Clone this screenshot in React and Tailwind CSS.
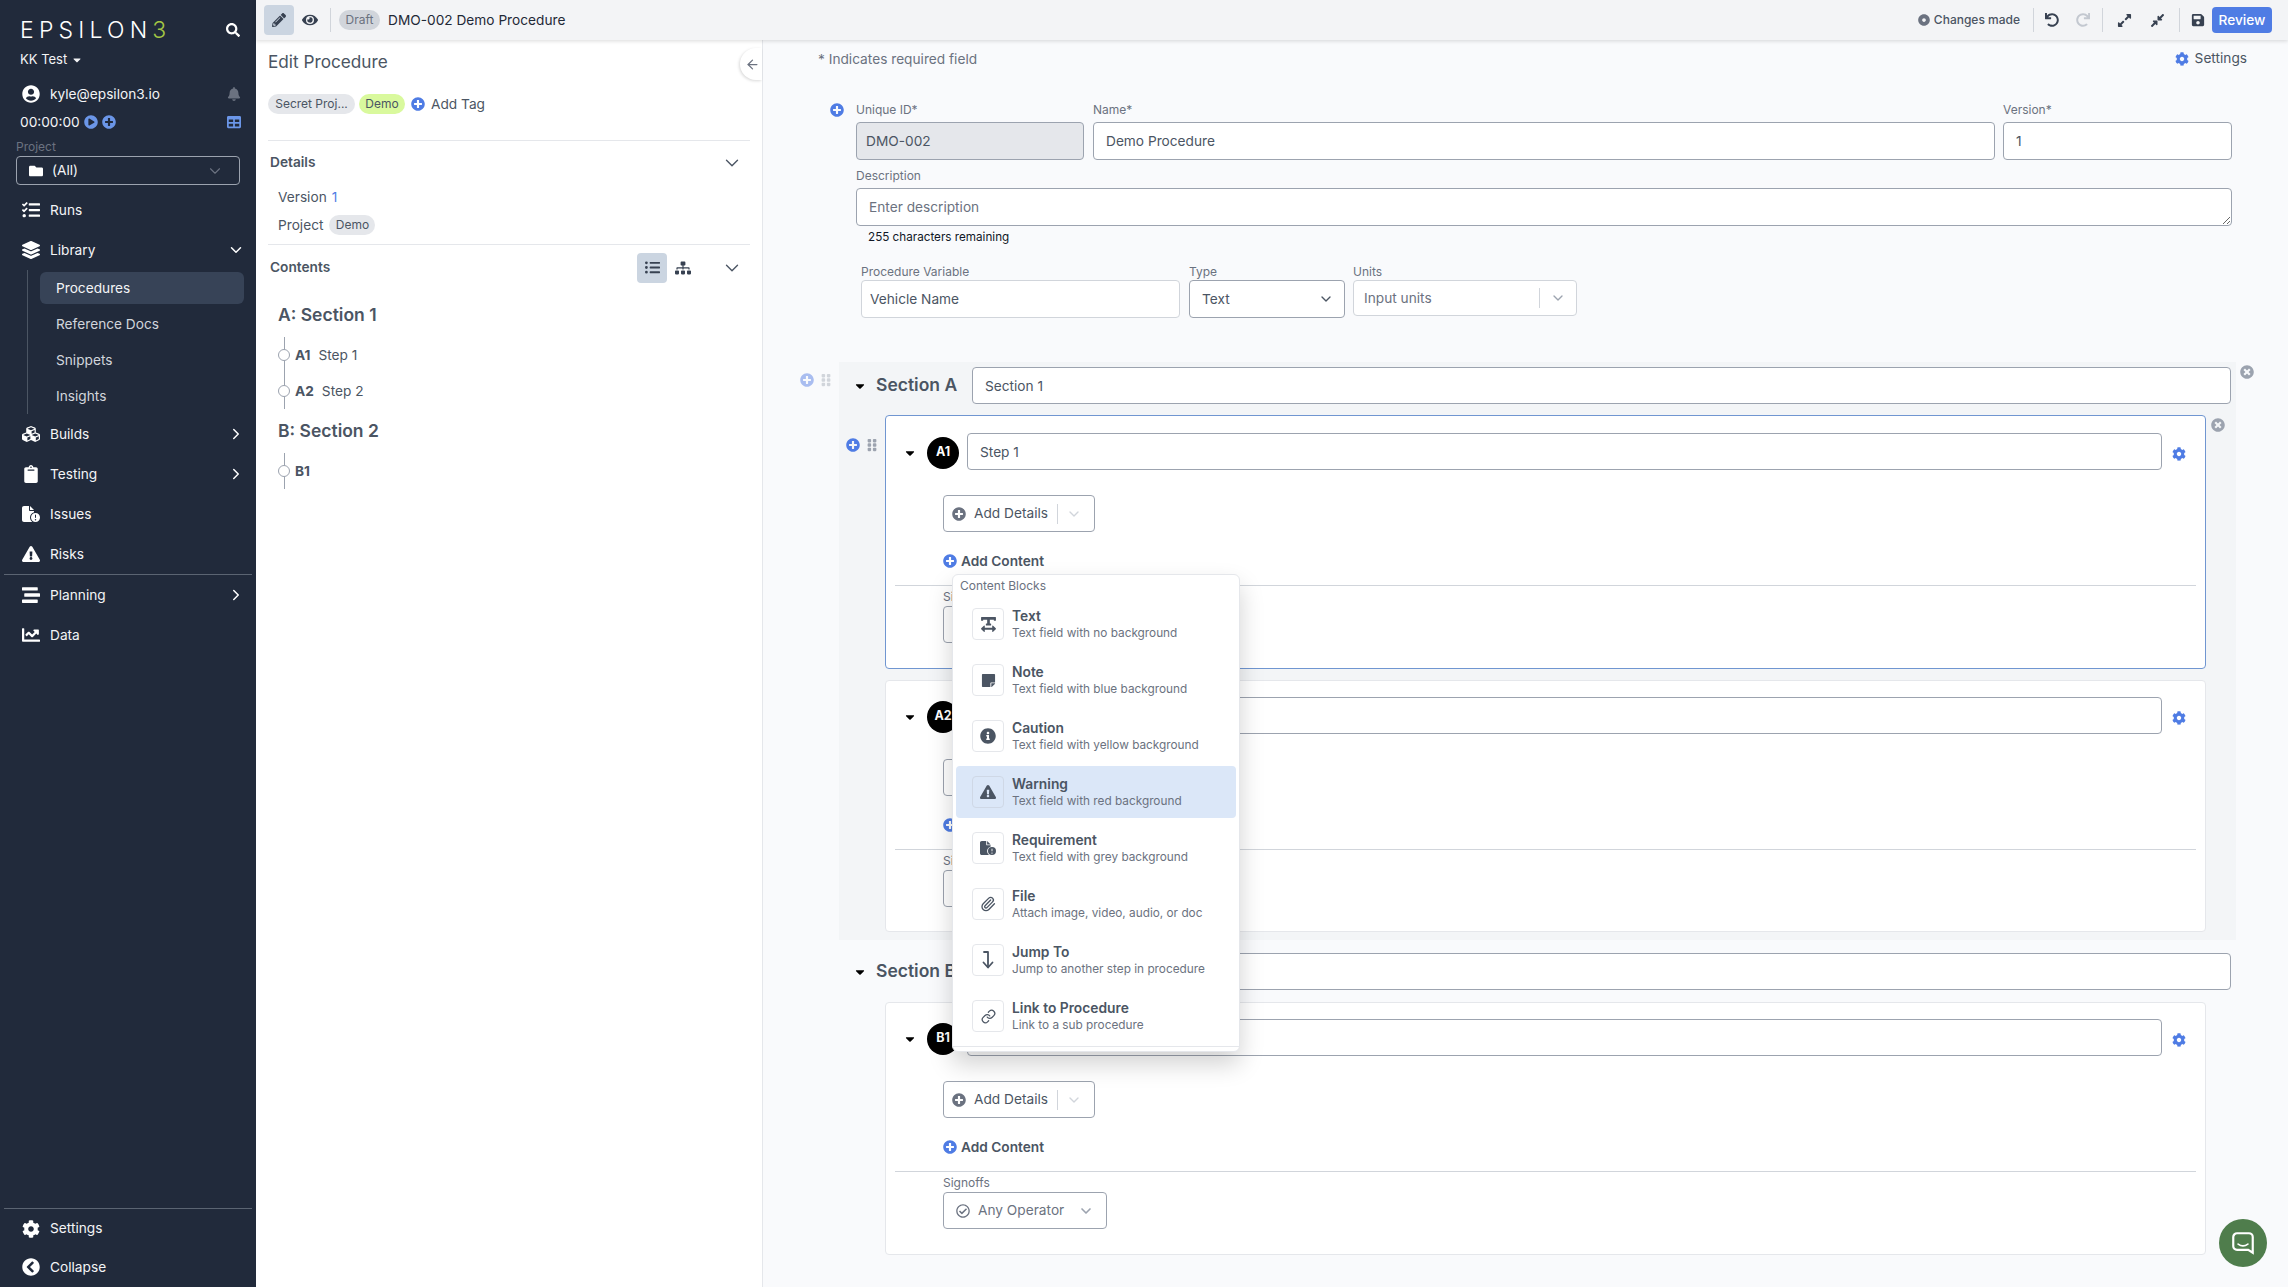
import React from "react";
import { ChevronDown, ChevronRight, ArrowLeft, Link as LinkIcon, Paperclip } from "lucide-react";
import {
  FaSearch, FaCaretDown, FaUserCircle, FaBell, FaPlayCircle, FaPlusCircle, FaTable, FaFolder, FaTasks,
  FaLayerGroup, FaCubes, FaClipboard, FaExclamationTriangle, FaStream, FaChartLine, FaCog, FaChevronCircleLeft,
  FaPencilAlt, FaEye, FaUndo, FaRedo, FaExpandAlt, FaCompressAlt, FaSave, FaListUl, FaSitemap, FaDotCircle,
  FaTextWidth, FaStickyNote, FaInfoCircle, FaGripVertical, FaTimesCircle, FaRegCheckCircle,
} from "react-icons/fa";
import { FaFileCircleExclamation } from "react-icons/fa6";

const inputCls = "rounded border border-[#9ca3af] text-[13.7px] text-[#4b5563] outline-none placeholder:text-[#6b7280]";

function NavItem({ icon: Icon, label, open, arrow }) {
  return (
    <div className="flex h-[40px] items-center pl-[22px] pr-[11px] text-[13.7px] text-[#f3f4f6]">
      <Icon size={18} className="w-[18px] shrink-0 text-white" />
      <span className="ml-[10px]">{label}</span>
      {arrow && (open
        ? <ChevronDown size={18} className="ml-auto text-white" />
        : <ChevronRight size={18} className="ml-auto text-white" />)}
    </div>
  );
}

function Sidebar() {
  return (
    <aside className="flex h-full w-[256px] shrink-0 flex-col bg-[#212a3b]">
      <div className="mt-[10px] flex h-[40px] items-center pl-[20px] pr-[16px]">
        <span className="text-[23px] font-light tracking-[5.2px] text-white">
          EPSILON<span className="text-[#a3c644]">3</span>
        </span>
        <FaSearch size={14} className="ml-auto text-white" />
      </div>
      <div className="flex h-[20px] items-center pl-[20px] text-[13px] text-[#f3f4f6]">
        KK Test <FaCaretDown size={12} className="ml-[4px]" />
      </div>
      <div className="mt-[14px] flex h-[20px] items-center pl-[22px] pr-[15px] text-[13.7px] text-[#f3f4f6]">
        <FaUserCircle size={18} className="text-white" />
        <span className="ml-[10px]">kyle@epsilon3.io</span>
        <FaBell size={14} className="ml-auto text-[#6b7280]" />
      </div>
      <div className="mt-[8px] flex h-[20px] items-center pl-[20px] pr-[15px] text-[13.7px] text-[#f3f4f6]">
        <span>00:00:00</span>
        <FaPlayCircle size={14} className="ml-[4px] text-[#6b96e8]" />
        <FaPlusCircle size={14} className="ml-[4px] text-[#6b96e8]" />
        <FaTable size={14} className="ml-auto text-[#6b96e8]" />
      </div>
      <div className="mt-[7px] flex h-[16px] items-center pl-[16px] text-[12px] text-[#6b7280]">Project</div>
      <div className="mx-[16px] mt-[1px] flex h-[29px] items-center rounded border border-[#9ca3af] pl-[12px] pr-[15px] text-[13.7px] text-[#f3f4f6]">
        <FaFolder size={14} className="text-white" />
        <span className="ml-[9px]">(All)</span>
        <ChevronDown size={18} strokeWidth={1.5} className="ml-auto text-[#6b7280]" />
      </div>
      <div className="mt-[5px]">
        <NavItem icon={FaTasks} label="Runs" />
        <NavItem icon={FaLayerGroup} label="Library" arrow open />
        <div className="ml-[27px] flex h-[144px] flex-col gap-[4px] border-l border-[#4b5563] pl-[12px] pr-[12px] pt-[2px] text-[13.7px] text-[#d1d5db]">
          <div className="flex h-[32px] items-center rounded-md bg-[#374357] pl-[16px] text-[#f3f4f6]">Procedures</div>
          <div className="flex h-[32px] items-center pl-[16px]">Reference Docs</div>
          <div className="flex h-[32px] items-center pl-[16px]">Snippets</div>
          <div className="flex h-[32px] items-center pl-[16px]">Insights</div>
        </div>
        <NavItem icon={FaCubes} label="Builds" arrow />
        <NavItem icon={FaClipboard} label="Testing" arrow />
        <NavItem icon={FaFileCircleExclamation} label="Issues" />
        <NavItem icon={FaExclamationTriangle} label="Risks" />
        <div className="mx-[4px] h-px bg-[#5b6472]" />
        <NavItem icon={FaStream} label="Planning" arrow />
        <NavItem icon={FaChartLine} label="Data" />
      </div>
      <div className="mt-auto pb-px">
        <div className="mx-[4px] h-px bg-[#5b6472]" />
        <div className="h-[39px] [&>div]:h-[39px]"><NavItem icon={FaCog} label="Settings" /></div>
        <div className="h-[38px] [&>div]:h-[38px]"><NavItem icon={FaChevronCircleLeft} label="Collapse" /></div>
      </div>
    </aside>
  );
}

function TopBar() {
  const divider = "h-[24px] w-px bg-[#d1d5db]";
  return (
    <header className="relative z-10 flex h-[40px] shrink-0 items-center bg-[#f3f4f6] pl-[8px] pr-[16px] shadow-[0_1px_4px_rgba(0,0,0,0.15)]">
      <div className="flex h-[30px] w-[30px] items-center justify-center rounded bg-[#cbd5e1]">
        <FaPencilAlt size={14} className="text-[#374151]" />
      </div>
      <FaEye size={16} className="ml-[8px] text-[#374151]" />
      <div className={`ml-[12px] ${divider}`} />
      <span className="ml-[8px] flex h-[20px] w-[41px] items-center justify-center rounded-full bg-[#d1d5db] text-[12px] text-[#6b7280]">Draft</span>
      <span className="ml-[8px] text-[13.7px] text-[#1f2937]">DMO-002 Demo Procedure</span>
      <div className="ml-auto flex items-center">
        <FaDotCircle size={12} className="text-[#6b7280]" />
        <span className="ml-[4px] text-[12px] font-medium text-[#4b5563]">Changes made</span>
        <div className={`ml-[13px] ${divider}`} />
        <FaUndo size={14} className="ml-[11px] text-[#374151]" />
        <FaRedo size={14} className="ml-[17px] text-[#c3c8d0]" />
        <div className={`ml-[12px] ${divider}`} />
        <FaExpandAlt size={15} className="ml-[14px] text-[#374151]" />
        <FaCompressAlt size={15} className="ml-[18px] text-[#374151]" />
        <div className={`ml-[14px] ${divider}`} />
        <FaSave size={14} className="ml-[11px] text-[#374151]" />
        <button className="ml-[7px] h-[26px] w-[60px] rounded bg-[#4f7ce4] text-[13.7px] font-medium text-white">Review</button>
      </div>
    </header>
  );
}

function TocItem({ code, label }) {
  return (
    <div className="relative ml-[6px] flex h-[36px] items-center border-l border-[#9ca3af] pl-[10px] text-[13.7px] text-[#4b5563]">
      <span className="absolute left-[-7px] top-[12px] h-[12px] w-[12px] rounded-full border border-[#9ca3af] bg-white" />
      <span className="font-bold">{code}</span>
      {label && <span className="ml-[8px]">{label}</span>}
    </div>
  );
}

function EditPanel() {
  const chev = <ChevronDown size={22} strokeWidth={1.5} className="text-[#4b5563]" />;
  return (
    <section className="relative h-full w-[507px] shrink-0 border-r border-[#e5e7eb] bg-white px-[12px] text-[#4b5563]">
      <div className="absolute right-0 top-[8px] flex h-[32px] w-[22px] items-center justify-end rounded-l-full bg-white pr-[2px] shadow-[-1px_1px_3px_rgba(0,0,0,0.15)]">
        <ArrowLeft size={15} className="text-[#6b7280]" />
      </div>
      <h1 className="mt-[8px] flex h-[28px] items-center text-[17.2px] text-[#4b5563]">Edit Procedure</h1>
      <div className="mt-[18px] flex h-[20px] items-center text-[12px]">
        <span className="flex h-[20px] w-[87px] items-center justify-center rounded-full bg-[#e5e7eb]">Secret Proj...</span>
        <span className="ml-[4px] flex h-[20px] w-[46px] items-center justify-center rounded-full bg-[#d9f99d]">Demo</span>
        <FaPlusCircle size={14} className="ml-[6px] text-[#4f7ce4]" />
        <span className="ml-[6px] text-[13.7px]">Add Tag</span>
      </div>
      <div className="mt-[26px] h-px bg-[#e5e7eb]" />
      <div className="flex h-[43px] items-center justify-between pl-[2px] pr-[7px] text-[13.7px] font-semibold">
        Details {chev}
      </div>
      <div className="mt-[1px] flex h-[24px] items-center pl-[10px] text-[13.7px]">
        Version <span className="ml-[5px] text-[#4f7ce4]">1</span>
      </div>
      <div className="mt-[6px] flex h-[20px] items-center pl-[10px] text-[13.7px]">
        Project
        <span className="ml-[6px] flex h-[20px] w-[46px] items-center justify-center rounded-full bg-[#e5e7eb] text-[12px]">Demo</span>
      </div>
      <div className="mt-[9px] h-px bg-[#e5e7eb]" />
      <div className="flex h-[45px] items-center pl-[2px] pr-[7px] text-[13.7px] font-semibold">
        Contents
        <div className="ml-auto flex h-[30px] w-[30px] items-center justify-center rounded bg-[#cbd5e1]">
          <FaListUl size={15} className="text-[#374151]" />
        </div>
        <FaSitemap size={16} className="ml-[8px] text-[#374151]" />
        <div className="ml-[30px]">{chev}</div>
      </div>
      <div className="ml-[10px]">
        <h2 className="mt-[11px] flex h-[28px] items-center text-[17.5px] font-semibold">A: Section 1</h2>
        <div className="mt-[8px]">
          <TocItem code="A1" label="Step 1" />
          <TocItem code="A2" label="Step 2" />
        </div>
        <h2 className="mt-[8px] flex h-[28px] items-center text-[17.5px] font-semibold">B: Section 2</h2>
        <div className="mt-[8px]">
          <TocItem code="B1" />
        </div>
      </div>
    </section>
  );
}

function AddDetails() {
  return (
    <div className="ml-[57px] flex h-[37px] w-[152px] items-center rounded border border-[#9ca3af] pl-[8px] text-[13.7px] text-[#4b5563]">
      <FaPlusCircle size={14} className="text-[#6b7280]" />
      <span className="ml-[8px]">Add Details</span>
      <div className="ml-[9px] h-[20px] w-px bg-[#d1d5db]" />
      <ChevronDown size={16} className="ml-[8px] text-[#d1d5db]" />
    </div>
  );
}

function Card({ code, title, topPad, bottomPad, active }) {
  return (
    <div className={`flex-1 rounded-sm border bg-white ${active ? "border-[#7096d1]" : "border-[#e5e7eb]"} ${topPad} ${bottomPad}`}>
      <div className="flex items-center pl-[19px] pr-[18px]">
        <FaCaretDown size={14} className="mt-[2px] w-[10px] text-black" />
        <span className="ml-[12px] mt-[2px] flex h-[32px] w-[32px] items-center justify-center rounded-full bg-black text-[12.5px] font-bold text-white">{code}</span>
        <input readOnly defaultValue={title} className={`${inputCls} ml-[8px] h-[37px] flex-1 bg-white px-[12px]`} />
        <FaCog size={14} className="ml-[9px] mt-[4px] w-[16px] text-[#4f7ce4]" />
      </div>
      <div className="mt-[25px]"><AddDetails /></div>
      <div className="ml-[57px] mt-[19px] flex h-[20px] items-center text-[13.7px] font-semibold text-[#4b5563]">
        <FaPlusCircle size={14} className="text-[#4f7ce4]" />
        <span className="ml-[4px]">Add Content</span>
      </div>
      <div className="mx-[9px] mt-[14px] h-px bg-[#d1d5db]" />
      <div className="ml-[57px] flex h-[20px] items-center pt-[2px] text-[12px] text-[#6b7280]">Signoffs</div>
      <div className="ml-[57px] flex h-[37px] w-[164px] items-center rounded border border-[#9ca3af] pl-[12px] pr-[12px] text-[13.7px] text-[#6b7280]">
        <FaRegCheckCircle size={14} className="text-[#6b7280]" />
        <span className="ml-[8px]">Any Operator</span>
        <ChevronDown size={16} strokeWidth={2.5} className="ml-auto text-[#9ca3af]" />
      </div>
    </div>
  );
}

function SectionHead({ label, title }) {
  return (
    <div className="flex h-[37px] items-center pl-[16px] pr-[5px]">
      <FaCaretDown size={14} className="w-[10px] text-black" />
      <span className="ml-[11px] w-[96px] text-[17.5px] font-semibold text-[#4b5563]">{label}</span>
      <input readOnly defaultValue={title} className={`${inputCls} h-[37px] flex-1 bg-white px-[12px]`} />
    </div>
  );
}

function Remove() {
  return <FaTimesCircle size={14} className="text-[#9ca3af]" />;
}

function JumpIcon() {
  return (
    <svg width="16" height="20" viewBox="0 0 16 20" fill="none" stroke="currentColor" strokeWidth="1.8" strokeLinecap="round" strokeLinejoin="round">
      <path d="M4 2h4v15" />
      <path d="M3.500 12.500 8 17.500l4.500-5" />
    </svg>
  );
}

function MenuItem({ icon, title, desc, hot }) {
  return (
    <div className={`flex h-[52px] items-center rounded pl-[16px] ${hot ? "bg-[#dbe7f8]" : ""}`}>
      <div className={`flex h-[32px] w-[32px] items-center justify-center rounded border text-[#4b5563] ${hot ? "border-[#cfd8e6]" : "border-[#e5e7eb]"}`}>
        {icon}
      </div>
      <div className="ml-[8px] mt-[1px]">
        <div className="text-[13.8px] font-semibold leading-[18px] text-[#4b5563]">{title}</div>
        <div className="text-[11.8px] leading-[17px] text-[#6b7280]">{desc}</div>
      </div>
    </div>
  );
}

function BlockMenu() {
  return (
    <div className="absolute left-[189px] top-[534px] z-20 h-[478px] w-[288px] rounded-md border border-[#e5e7eb] bg-white shadow-[0_12px_24px_rgba(0,0,0,0.18)]">
      <div className="flex h-[22px] items-center pl-[7px] text-[12px] text-[#6b7280]">Content Blocks</div>
      <div className="mx-[3px] mt-[1px] flex flex-col gap-[4px]">
        <MenuItem icon={<FaTextWidth size={17} />} title="Text" desc="Text field with no background" />
        <MenuItem icon={<FaStickyNote size={15} />} title="Note" desc="Text field with blue background" />
        <MenuItem icon={<FaInfoCircle size={16} />} title="Caution" desc="Text field with yellow background" />
        <MenuItem hot icon={<FaExclamationTriangle size={16} />} title="Warning" desc="Text field with red background" />
        <MenuItem icon={<FaFileCircleExclamation size={16} />} title="Requirement" desc="Text field with grey background" />
        <MenuItem icon={<Paperclip size={16} />} title="File" desc="Attach image, video, audio, or doc" />
        <MenuItem icon={<JumpIcon />} title="Jump To" desc="Jump to another step in procedure" />
        <MenuItem icon={<LinkIcon size={15} />} title="Link to Procedure" desc="Link to a sub procedure" />
      </div>
      <div className="mt-[4px] h-px bg-[#e5e7eb]" />
    </div>
  );
}

function Main() {
  return (
    <main className="relative h-full flex-1 overflow-hidden bg-[#f9fafc]">
      <div className="flex h-[38px] items-center pl-[55px] pr-[41px] text-[13.7px] text-[#6b7280]">
        <span>* Indicates required field</span>
        <FaCog size={14} className="mb-[1px] ml-auto text-[#4f7ce4]" />
        <span className="mb-[1px] ml-[6px] text-[#4b5563]">Settings</span>
      </div>

      <div className="mt-[23px] flex items-start pl-[67px] pr-[56px]">
        <FaPlusCircle size={14} className="mt-[2px] text-[#4f7ce4]" />
        <div className="ml-[12px] flex-1">
          <div className="flex gap-[9px] text-[12px] text-[#6b7280]">
            <div className="w-[228px]">
              <div className="flex h-[18px] items-center">Unique ID*</div>
              <input readOnly defaultValue="DMO-002" className={`${inputCls} mt-[3px] h-[38px] w-full bg-[#e5e7eb] px-[9px]`} />
            </div>
            <div className="flex-1">
              <div className="flex h-[18px] items-center">Name*</div>
              <input readOnly defaultValue="Demo Procedure" className={`${inputCls} mt-[3px] h-[38px] w-full bg-white px-[12px]`} />
            </div>
            <div className="-ml-[1px] w-[229px]">
              <div className="flex h-[18px] items-center">Version*</div>
              <input readOnly defaultValue="1" className={`${inputCls} mt-[3px] h-[38px] w-full bg-white px-[12px]`} />
            </div>
          </div>
          <div className="mt-[7px] flex h-[18px] items-center text-[12px] text-[#6b7280]">Description</div>
          <textarea rows={1} placeholder="Enter description" className={`${inputCls} mt-[3px] block h-[38px] w-full bg-white px-[12px] py-[8px] leading-[20px]`} />
          <div className="ml-[12px] mt-[4px] flex h-[16px] items-center text-[11.7px] text-[#111827]">255 characters remaining</div>
          <div className="ml-[5px] mt-[17px] flex text-[12px] text-[#6b7280]">
            <div className="w-[319px]">
              <div className="flex h-[18px] items-center">Procedure Variable</div>
              <input readOnly defaultValue="Vehicle Name" className="-mt-[1px] h-[38px] w-full rounded border border-[#d1d5db] bg-white px-[8px] text-[13.7px] text-[#4b5563] outline-none" />
            </div>
            <div className="ml-[9px] w-[156px]">
              <div className="flex h-[18px] items-center">Type</div>
              <div className="-mt-[1px] flex h-[38px] items-center rounded border border-[#9ca3af] bg-white pl-[12px] pr-[10px] text-[13.7px] text-[#4b5563]">
                Text
                <ChevronDown size={16} className="ml-auto text-[#4b5563]" />
              </div>
            </div>
            <div className="ml-[8px] w-[224px]">
              <div className="flex h-[18px] items-center">Units</div>
              <div className="-mt-[1px] flex h-[36px] items-center rounded border border-[#d1d5db] bg-white pl-[10px] text-[13.7px] text-[#6b7280]">
                Input units
                <div className="ml-auto h-[20px] w-px bg-[#d1d5db]" />
                <ChevronDown size={16} className="mx-[10px] text-[#9ca3af]" />
              </div>
            </div>
          </div>
        </div>
      </div>

      {/* section A */}
      <div className="mt-[44px] flex">
        <div className="flex w-[76px] items-start pl-[37px] pt-[11px]">
          <FaPlusCircle size={14} className="text-[#a9bdf0]" />
          <FaGripVertical size={14} className="ml-[5px] text-[#d1d5db]" />
        </div>
        <div className="h-[578px] flex-1 bg-[#f3f5f7] pt-[5px]">
          <SectionHead label="Section A" title="Section 1" />
          <div className="mt-[11px] flex">
            <div className="flex w-[46px] items-start pl-[7px] pt-[23px]">
              <FaPlusCircle size={14} className="text-[#4f7ce4]" />
              <FaGripVertical size={14} className="ml-[5px] text-[#9ca3af]" />
            </div>
            <Card active code="A1" title="Step 1" topPad="pt-[17px]" bottomPad="pb-[25px]" />
            <div className="w-[30px] pl-[5px] pt-[3px]"><Remove /></div>
          </div>
          <div className="mt-[11px] flex pl-[46px] pr-[30px]">
            <Card code="A2" title="Step 2" topPad="pt-[16px]" bottomPad="pb-[24px]" />
          </div>
        </div>
        <div className="w-[52px] pl-[4px] pt-[3px]"><Remove /></div>
      </div>

      {/* section B */}
      <div className="flex pl-[76px] pr-[52px] pt-[13px]">
        <div className="flex-1">
          <SectionHead label="Section B" title="Section 2" />
          <div className="mt-[12px] flex pl-[46px] pr-[30px]">
            <Card code="B1" title="" topPad="pt-[16px]" bottomPad="pb-[25px]" />
          </div>
        </div>
      </div>

      <BlockMenu />

      <div className="absolute bottom-[20px] right-[21px] z-30 flex h-[48px] w-[48px] items-center justify-center rounded-full bg-[#4f7d4c]">
        <svg width="26" height="26" viewBox="0 0 24 24" fill="none">
          <path d="M6.5 3h11A3.5 3.5 0 0 1 21 6.500V21l-4.200-2.600H6.500A3.500 3.500 0 0 1 3 14.900V6.500A3.500 3.500 0 0 1 6.500 3z" stroke="white" strokeWidth="2" />
          <path d="M7.500 13c2.800 2 6.200 2 9 0" stroke="white" strokeWidth="1.600" strokeLinecap="round" />
        </svg>
      </div>
    </main>
  );
}

export default function App() {
  return (
    <div className="flex h-[1287px] w-[2288px] overflow-hidden font-['Inter',sans-serif]">
      <Sidebar />
      <div className="flex h-full flex-1 flex-col">
        <TopBar />
        <div className="flex h-[1247px]">
          <EditPanel />
          <Main />
        </div>
      </div>
    </div>
  );
}
